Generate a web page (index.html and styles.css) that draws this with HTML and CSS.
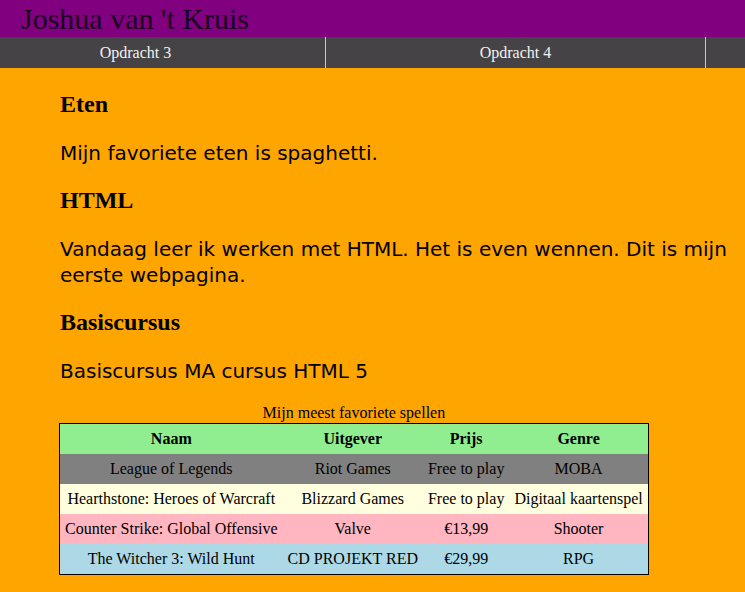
FILE: index.html
```html
<!DOCTYPE html>
<html lang="nl">
<head>
<meta charset="utf-8">
<title>Joshua van 't Kruis</title>
<link rel="stylesheet" href="styles.css">
</head>
<body>
<header class="site-header">
  <h1 class="site-title">Joshua van 't Kruis</h1>
</header>
<nav class="site-nav">
  <ul class="nav-list">
    <li class="nav-item"><a class="nav-link" href="#">Opdracht 3</a></li>
    <li class="nav-item"><a class="nav-link" href="#">Opdracht 4</a></li>
  </ul>
</nav>
<main class="content">
  <h2 class="section-title">Eten</h2>
  <p class="text">Mijn favoriete eten is spaghetti.</p>
  <h2 class="section-title">HTML</h2>
  <p class="text">Vandaag leer ik werken met HTML. Het is even wennen. Dit is mijn eerste webpagina.</p>
  <h2 class="section-title">Basiscursus</h2>
  <p class="text">Basiscursus MA cursus HTML 5</p>
  <table class="games">
    <caption class="games-caption">Mijn meest favoriete spellen</caption>
    <tr class="row-head">
      <th>Naam</th><th>Uitgever</th><th>Prijs</th><th>Genre</th>
    </tr>
    <tr class="row-grey">
      <td>League of Legends</td><td>Riot Games</td><td>Free to play</td><td>MOBA</td>
    </tr>
    <tr class="row-yellow">
      <td>Hearthstone: Heroes of Warcraft</td><td>Blizzard Games</td><td>Free to play</td><td>Digitaal kaartenspel</td>
    </tr>
    <tr class="row-pink">
      <td>Counter Strike: Global Offensive</td><td>Valve</td><td>€13,99</td><td>Shooter</td>
    </tr>
    <tr class="row-blue">
      <td>The Witcher 3: Wild Hunt</td><td>CD PROJEKT RED</td><td>€29,99</td><td>RPG</td>
    </tr>
  </table>
</main>
</body>
</html>
```
FILE: styles.css
```css
html, body {
  margin: 0;
  padding: 0;
}
body {
  background: #ffa500;
  font-family: "Liberation Serif", "Times New Roman", serif;
  color: #000;
  overflow-x: hidden;
}
.site-header {
  background: #800080;
  height: 37px;
  padding: 2px 0 0 21px;
  box-sizing: border-box;
}
.site-title {
  margin: 0;
  font-size: 30px;
  font-weight: normal;
  line-height: 33px;
  color: #1a001c;
}
.site-nav {
  background: #454345;
  height: 31px;
  overflow: hidden;
}
.nav-list {
  list-style: none;
  margin: 0 0 0 -54px;
  padding: 0;
  display: flex;
}
.nav-item {
  width: 379px;
  border-right: 1px solid #c8c8c8;
  height: 31px;
}
.nav-link {
  display: block;
  text-align: center;
  color: #f2f2f2;
  text-decoration: none;
  font-size: 16px;
  line-height: 18px;
  padding: 7px 0 6px;
}
.content {
  padding: 2px 0 0 60px;
}
.section-title {
  font-size: 24px;
  font-weight: bold;
  line-height: 28px;
  margin: 20px 0;
}
.text {
  font-family: "DejaVu Sans", Verdana, sans-serif;
  font-size: 20px;
  line-height: 26px;
  margin: 22px 0 20px;
}
.games {
  border: 1px solid #000;
  border-collapse: collapse;
  margin-left: -1px;
  font-size: 16px;
}
.games-caption {
  line-height: 18px;
  padding-bottom: 1px;
}
.games th,
.games td {
  padding: 6px 5px;
  line-height: 18px;
  text-align: center;
  white-space: nowrap;
}
.row-head { background: #90ee90; }
.row-grey { background: #808080; }
.row-yellow { background: #ffffe0; }
.row-pink { background: #ffb6c1; }
.row-blue { background: #add8e6; }
```
